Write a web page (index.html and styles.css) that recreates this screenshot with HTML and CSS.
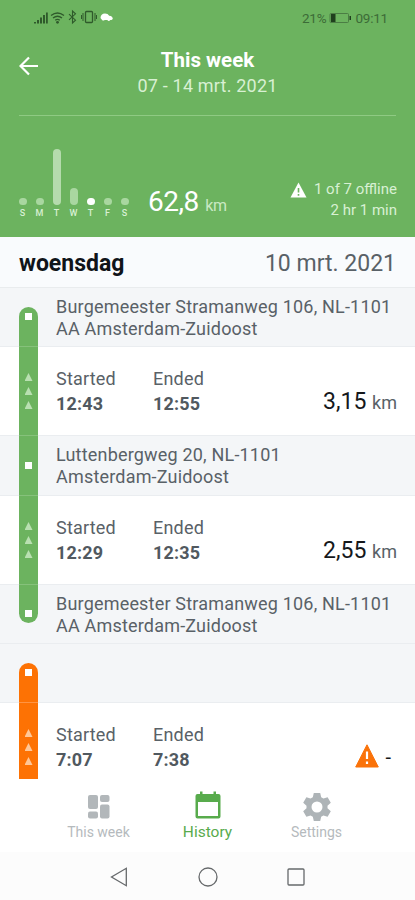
FILE: index.html
```html
<!DOCTYPE html>
<html lang="nl">
<head>
<meta charset="utf-8">
<title>This week</title>
<link rel="stylesheet" href="styles.css">
</head>
<body>
<div class="app">
  <header class="head">
    <div class="status">
      <svg class="status-icons" width="82" height="16" viewBox="0 0 82 16">
        <g fill="#2f5a2b">
          <path d="M1 13h2v1.500H1zM4 11h2v3.500H4zM7 8.500h2v6H7zM10 6h2v8.500h-2zM13 3.500h1.800v11H13z"/>
        </g>
        <g fill="none" stroke="#2f5a2b" stroke-width="1.300">
          <path d="M18 6.500q6.500-5 13 0M20 9q4.500-3.500 9 0M22.200 11.300q2.300-1.800 4.600 0"/>
          <path d="M36 5.200l6.500 6-3 2.800v-12l3 2.800-6.500 6" stroke-width="1.100"/>
          <rect x="52.500" y="2.500" width="7" height="11" rx="1"/>
          <path d="M50 4v8M48.500 6v4M62 4v8M63.500 6v4" stroke-width="1"/>
        </g>
        <circle cx="24.500" cy="13.300" r="1.400" fill="#2f5a2b"/>
        <path d="M67.500 9q.2-4.500 4.500-4.500 3 0 4.200 2.300 3.600.3 3.600 3.200l-1.300 1h-1.200q-1.500 2-3 0h-2.600q-1.600 1.300-2.800-.3z" fill="#fff"/>
      </svg>
      <div class="status-right">
        <span>21%</span>
        <svg width="23" height="12" viewBox="0 0 23 12"><rect x="1" y="1.500" width="18.500" height="9" rx="1" fill="none" stroke="#4b7d44"/><path d="M2 2h4.500v8H2zM20.500 4h1.500v4h-1.500z" fill="#1f3f1d"/></svg>
        <span>09:11</span>
      </div>
    </div>
    <div class="title-row">
      <svg class="back" width="20" height="20" viewBox="0 0 20 20"><path d="M19 10H2M10 1.500L1.500 10l8.500 8.500" fill="none" stroke="#fff" stroke-width="2.200"/></svg>
      <div class="title">
        <h1>This week</h1>
        <p>07 - 14 mrt. 2021</p>
      </div>
    </div>
    <div class="summary">
      <div class="chart">
        <div class="day"><i class="bar"></i><b>S</b></div>
        <div class="day"><i class="bar"></i><b>M</b></div>
        <div class="day"><i class="bar tall"></i><b>T</b></div>
        <div class="day"><i class="bar mid"></i><b>W</b></div>
        <div class="day"><i class="bar today"></i><b>T</b></div>
        <div class="day"><i class="bar"></i><b>F</b></div>
        <div class="day"><i class="bar"></i><b>S</b></div>
      </div>
      <div class="total"><span>62,8</span> <small>km</small></div>
      <div class="facts">
        <div class="offline"><svg width="17" height="16" viewBox="0 0 17 16"><path d="M8.500.5L16.500 15.500H.5z" fill="#fff"/><path d="M8.500 6v4.500M8.500 12v1.700" stroke="#6cb35f" stroke-width="1.600"/></svg><span>1 of 7 offline</span></div>
        <div>2 hr 1 min</div>
      </div>
    </div>
  </header>

  <main class="list">
    <div class="date-row"><h2>woensdag</h2><span>10 mrt. 2021</span></div>

    <section class="row place">
      <div class="rail start"><i class="stop"></i></div>
      <p class="address">Burgemeester Stramanweg 106, NL-1101<br>AA Amsterdam-Zuidoost</p>
    </section>
    <section class="row trip">
      <div class="rail"><i class="arrow"></i><i class="arrow"></i><i class="arrow"></i></div>
      <dl class="time"><dt>Started</dt><dd>12:43</dd></dl>
      <dl class="time"><dt>Ended</dt><dd>12:55</dd></dl>
      <div class="distance"><span>3,15</span> <small>km</small></div>
    </section>
    <section class="row place middle">
      <div class="rail"><i class="stop"></i></div>
      <p class="address">Luttenbergweg 20, NL-1101<br>Amsterdam-Zuidoost</p>
    </section>
    <section class="row trip">
      <div class="rail"><i class="arrow"></i><i class="arrow"></i><i class="arrow"></i></div>
      <dl class="time"><dt>Started</dt><dd>12:29</dd></dl>
      <dl class="time"><dt>Ended</dt><dd>12:35</dd></dl>
      <div class="distance"><span>2,55</span> <small>km</small></div>
    </section>
    <section class="row place">
      <div class="rail end"><i class="stop"></i></div>
      <p class="address">Burgemeester Stramanweg 106, NL-1101<br>AA Amsterdam-Zuidoost</p>
    </section>
    <section class="row place">
      <div class="rail start offline-rail"><i class="stop"></i></div>
    </section>
    <section class="row trip last">
      <div class="rail offline-rail"><i class="arrow"></i><i class="arrow"></i><i class="arrow"></i></div>
      <dl class="time"><dt>Started</dt><dd>7:07</dd></dl>
      <dl class="time"><dt>Ended</dt><dd>7:38</dd></dl>
      <div class="distance missing"><svg width="24" height="24" viewBox="0 0 24 24"><path d="M12 .8L23.300 23H.7z" fill="#fa7209" stroke="#fa7209" stroke-linejoin="round"/><path d="M12 7.500v7.500M12 17.500v2.500" stroke="#fff" stroke-width="2.200"/></svg><span>-</span></div>
    </section>
  </main>

  <nav class="tabs">
    <div class="tab">
      <svg width="24" height="26" viewBox="0 0 24 26" fill="#b2b7ba"><rect x="1" y="1" width="10" height="14" rx="2"/><rect x="13" y="1" width="9.500" height="7" rx="2"/><rect x="1" y="17.500" width="10" height="7" rx="2"/><rect x="13" y="10.500" width="9.500" height="14" rx="2"/></svg>
      <span>This week</span>
    </div>
    <div class="tab active">
      <svg width="26" height="28" viewBox="0 0 26 28" fill="#58ab4c"><path fill-rule="evenodd" d="M2.500 3H5V.5h2.500V3h11V.5H21V3h2.500Q25.500 3 25.500 5v20.500q0 2-2 2h-21q-2 0-2-2V5q0-2 2-2zM3 11v14h20V11z"/></svg>
      <span>History</span>
    </div>
    <div class="tab">
      <svg width="28" height="30" viewBox="0 0 28 30"><path fill="#aeb4b7" fill-rule="evenodd" d="M10.800 1h6.400l1 4.300 2.200 1.300 4.200-1.300 3.200 5.400-3.300 3v2.600l3.300 3-3.200 5.400-4.200-1.300-2.200 1.300-1 4.300h-6.400l-1-4.300-2.200-1.300-4.200 1.300-3.200-5.400 3.300-3v-2.600l-3.300-3 3.200-5.400 4.200 1.300 2.200-1.300zM14 9.500a5.500 5.500 0 1 0 0 11 5.500 5.500 0 0 0 0-11z"/></svg>
      <span>Settings</span>
    </div>
  </nav>
  <footer class="keys">
    <svg width="18" height="20" viewBox="0 0 18 20"><path d="M16.300 1.300v17.400L1.500 10z"/></svg>
    <svg width="20" height="20" viewBox="0 0 20 20"><circle cx="10" cy="10" r="9"/></svg>
    <svg width="18" height="18" viewBox="0 0 18 18"><rect x="1" y="1" width="16" height="16" rx="1"/></svg>
  </footer>
</div>
</body>
</html>
```
FILE: styles.css
```css
* { box-sizing: border-box; margin: 0; padding: 0; }
body { font-family: Roboto, "Liberation Sans", sans-serif; color: #596167; background: #fff; }
.app { width: 415px; height: 900px; display: flex; flex-direction: column; overflow: hidden; }

.head { height: 237px; background: #6cb35f; color: #fff; flex: none; }
.status { height: 36px; padding: 9px 27px 0 33px; display: flex; justify-content: space-between; }
.status-right { display: flex; align-items: center; gap: 3px; height: 18px; font-size: 13.5px; letter-spacing: -.2px; color: #3c6b37; }
.title-row { height: 80px; margin: 0 19px; border-bottom: 1px solid #8fca83; display: flex; align-items: flex-start; }
.back { margin-top: 20px; }
.title { flex: 1; text-align: center; margin-right: 20px; padding-top: 11px; }
.title h1 { font-size: 20.5px; line-height: 26px; font-weight: 700; }
.title p { font-size: 18px; line-height: 26px; color: #d8f0d3; letter-spacing: .2px; }
.summary { display: flex; height: 121px; padding: 0 18px 0 14px; }
.chart { display: flex; align-items: flex-end; height: 103px; }
.day { width: 17px; display: flex; flex-direction: column; align-items: center; }
.bar { width: 8px; height: 7px; border-radius: 4px; background: #a9d7a0; }
.tall { height: 56px; background: #b5dbad; }
.mid { height: 17px; background: #a9d7a0; }
.today { background: #fff; }
.day b { font-size: 9px; line-height: 11px; margin-top: 3px; font-weight: 500; color: #d8f0d3; }
.total { margin: 69px 0 0 15px; font-size: 28px; line-height: 33px; white-space: nowrap; letter-spacing: -.5px; }
.total small { font-size: 16px; color: #c9e9c3; letter-spacing: -.3px; }
.facts { margin-left: auto; padding-top: 63px; font-size: 15px; line-height: 21px; text-align: right; color: #d8f0d3; white-space: nowrap; }
.offline { display: flex; align-items: center; gap: 7px; }

.list { height: 542px; overflow: hidden; flex: none; }
.date-row { height: 51px; padding: 3px 19px 0; background: #f9fbfd; border-bottom: 1px solid #e9ecee; display: flex; align-items: center; justify-content: space-between; font-size: 23px; }
.date-row h2 { font-size: 23px; color: #101419; font-weight: 700; }
.row { display: flex; padding: 0 18px 0 19px; }
.place { height: 59px; background: #f4f6f8; border-bottom: 1px solid #eaedf0; }
.trip { height: 89px; border-bottom: 1px solid #eaedf0; }
.place.middle { height: 60px; }
.rail { width: 19px; margin: 0 18px -1px 0; background: #6cb35f; border-bottom: 1px solid #86c17b; flex: none; display: flex; flex-direction: column; align-items: center; justify-content: center; }
.rail.start { margin-top: 19px; border-radius: 10px 10px 0 0; justify-content: flex-start; padding-top: 6px; }
.rail.end { height: 38px; border-bottom: 0; border-radius: 0 0 10px 10px; justify-content: flex-end; padding-bottom: 6px; }
.rail.offline-rail { background: #fd7204; border-bottom-color: #ff9443; }
.stop { width: 7px; height: 7px; background: #fff; }
.trip .rail { justify-content: flex-start; gap: 6px; padding-top: 26px; }
.arrow { width: 8px; height: 8px; clip-path: polygon(50% 0, 100% 100%, 0 100%); background: #b9e0b1; }
.offline-rail .arrow { background: #ffc797; }
.address { font-size: 18px; line-height: 22px; padding-top: 8px; white-space: nowrap; letter-spacing: .19px; }
.time { width: 97px; padding-top: 19px; font-size: 18px; line-height: 25px; letter-spacing: .2px; }
.time dd { font-weight: 700; color: #51595f; }
.distance { margin-left: auto; padding-top: 42px; font-size: 23px; line-height: 26px; color: #15181b; white-space: nowrap; }
.distance small { font-size: 18px; color: #596167; }
.missing { display: flex; gap: 6px; padding: 41px 6px 0 0; font-size: 20px; }

.tabs { height: 73px; display: flex; padding: 0 44px; background: #fff; flex: none; }
.tab { width: 109px; display: flex; flex-direction: column; align-items: center; justify-content: flex-end; font-size: 14px; line-height: 18px; color: #b5babd; padding-bottom: 11px; }
.tab svg { margin-bottom: 1px; }
.tab:first-child svg { margin-bottom: 3px; }
.active { color: #58ab4c; font-size: 15.5px; }
.active svg { margin-bottom: 4px; }
.keys { height: 48px; background: #fcfcfc; display: flex; align-items: center; justify-content: space-between; padding: 2px 110px 0; }
.keys svg { fill: none; stroke: #66696b; stroke-width: 1.3; }
```
